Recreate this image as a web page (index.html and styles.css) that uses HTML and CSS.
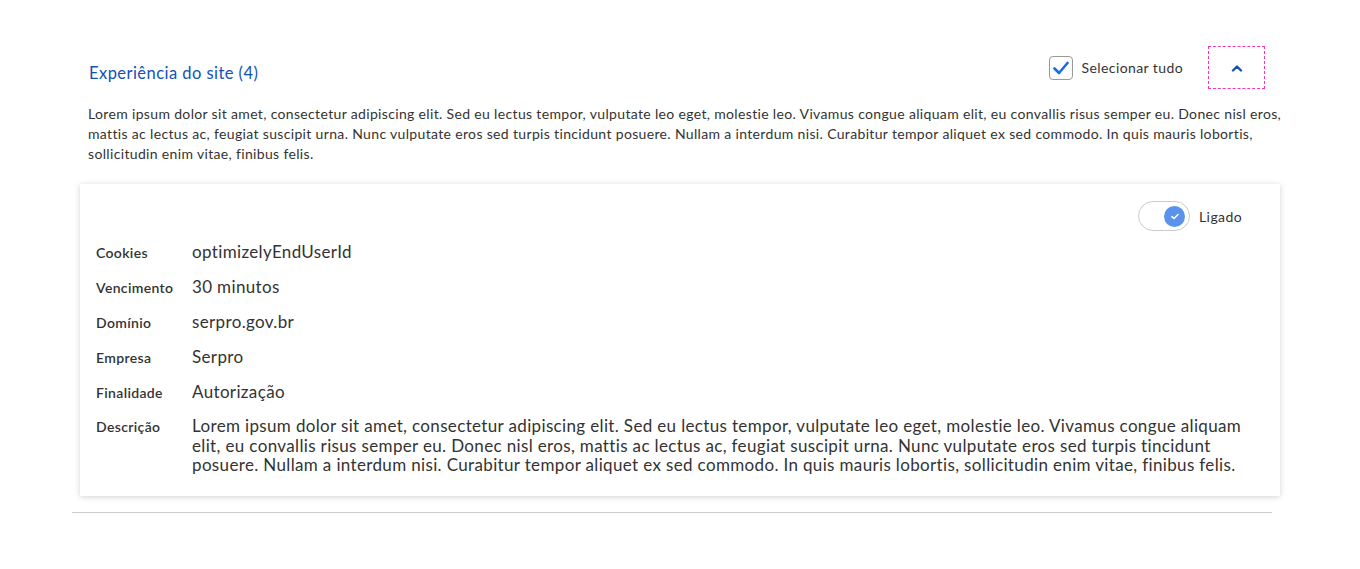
FILE: index.html
```html
<!DOCTYPE html>
<html lang="pt-BR">
<head>
    <meta charset="UTF-8">
    <meta name="viewport" content="width=device-width, initial-scale=1.0">
    <title>Experiência do site</title>
    <link rel="stylesheet" href="styles.css">
</head>
<body>
    <div class="page">
        <div class="group">
            <div class="group-header">
                <span class="group-title">Experiência do site (4)</span>
                <div class="group-actions">
                    <label class="check">
                        <span class="check-box">
                            <svg width="16" height="14" viewBox="0 0 16 14"><path d="M1.5 7.5 L6 12 L14.5 2" fill="none" stroke="#1a6ce0" stroke-width="2.6" stroke-linecap="round" stroke-linejoin="round"/></svg>
                        </span>
                        <span class="check-label">Selecionar tudo</span>
                    </label>
                    <button class="collapse-btn">
                        <svg width="12" height="8" viewBox="0 0 12 8"><path d="M2 6.5 L6 2.5 L10 6.5" fill="none" stroke="#1351b4" stroke-width="2.4" stroke-linecap="round" stroke-linejoin="round"/></svg>
                    </button>
                </div>
            </div>
            <p class="group-text">Lorem ipsum dolor sit amet, consectetur adipiscing elit. Sed eu lectus tempor, vulputate leo eget, molestie leo. Vivamus congue aliquam elit, eu convallis risus semper eu. Donec nisl eros, mattis ac lectus ac, feugiat suscipit urna. Nunc vulputate eros sed turpis tincidunt posuere. Nullam a interdum nisi. Curabitur tempor aliquet ex sed commodo. In quis mauris lobortis, sollicitudin enim vitae, finibus felis.</p>

            <div class="card">
                <div class="card-top">
                    <label class="switch">
                        <span class="switch-track">
                            <span class="switch-knob">
                                <svg width="8" height="7" viewBox="0 0 8 7"><path d="M1 3.6 L3 5.5 L7 1.5" fill="none" stroke="#fff" stroke-width="1.6" stroke-linecap="round" stroke-linejoin="round"/></svg>
                            </span>
                        </span>
                        <span class="switch-label">Ligado</span>
                    </label>
                </div>
                <div class="info">
                    <div class="info-row"><span class="info-key">Cookies</span><span class="info-val">optimizelyEndUserId</span></div>
                    <div class="info-row"><span class="info-key">Vencimento</span><span class="info-val">30 minutos</span></div>
                    <div class="info-row"><span class="info-key">Domínio</span><span class="info-val">serpro.gov.br</span></div>
                    <div class="info-row"><span class="info-key">Empresa</span><span class="info-val">Serpro</span></div>
                    <div class="info-row"><span class="info-key">Finalidade</span><span class="info-val">Autorização</span></div>
                    <div class="info-row"><span class="info-key">Descrição</span><span class="info-val desc">Lorem ipsum dolor sit amet, consectetur adipiscing elit. Sed eu lectus tempor, vulputate leo eget, molestie leo. Vivamus congue aliquam elit, eu convallis risus semper eu. Donec nisl eros, mattis ac lectus ac, feugiat suscipit urna. Nunc vulputate eros sed turpis tincidunt posuere. Nullam a interdum nisi. Curabitur tempor aliquet ex sed commodo. In quis mauris lobortis, sollicitudin enim vitae, finibus felis.</span></div>
                </div>
            </div>
        </div>
    </div>
</body>
</html>
```

FILE: styles.css
```css
body {
    margin: 0;
    font-family: Lato, "Open Sans", sans-serif;
    color: #333;
    background: #fff;
}
.page {
    padding: 46px 80px 0;
}
.group {
    margin: 0 8px 0 -8px;
    border-bottom: 1px solid #ccc;
    padding-bottom: 16px;
}
.group-header {
    display: flex;
    justify-content: space-between;
    align-items: center;
    padding: 0 7px 0 17px;
}
.group-title {
    color: #1351b4;
    font-size: 16.5px;
    letter-spacing: 0.45px;
    padding-top: 10px;
}
.group-actions {
    display: flex;
    align-items: center;
}
.check {
    display: flex;
    align-items: center;
    margin-right: 25px;
}
.check-box {
    width: 22px;
    height: 22px;
    border: 1px solid #999;
    border-radius: 4px;
    display: flex;
    justify-content: center;
    align-items: center;
}
.check-label {
    font-size: 14px;
    letter-spacing: 0.4px;
    margin-left: 9px;
}
.collapse-btn {
    width: 57px;
    height: 43px;
    border: 1px dashed #f03ab5;
    background: none;
    display: flex;
    justify-content: center;
    align-items: center;
    padding: 0;
}
.group-text {
    margin: 15px -18px 0 16px;
    font-size: 14px;
    letter-spacing: 0.34px;
    line-height: 20px;
}
.card {
    margin: 20px -8px 0 8px;
    box-shadow: 0 1px 6px rgba(0, 0, 0, 0.18);
    padding: 17px 16px 21px;
}
.card-top {
    display: flex;
    justify-content: flex-end;
    padding-right: 22px;
}
.switch {
    display: flex;
    align-items: center;
}
.switch-track {
    width: 52px;
    height: 30px;
    border: 1px solid #ccc;
    border-radius: 15px;
    display: flex;
    justify-content: flex-end;
    align-items: center;
    padding-right: 4px;
    box-sizing: border-box;
}
.switch-knob {
    width: 21px;
    height: 21px;
    border-radius: 50%;
    background: #5a92ec;
    display: flex;
    justify-content: center;
    align-items: center;
}
.switch-label {
    font-size: 14px;
    letter-spacing: 0.4px;
    margin-left: 9px;
}
.info {
    margin-top: 11px;
}
.info-row {
    display: grid;
    grid-template-columns: 96px 1fr;
    align-items: baseline;
    min-height: 35px;
}
.info-row:last-child {
    margin-top: -1px;
}
.info-key {
    font-size: 14px;
    font-weight: 600;
    letter-spacing: 0.35px;
}
.info-val {
    font-size: 17px;
    letter-spacing: 0.35px;
    line-height: 19.5px;
}
.desc {
    padding-right: 16px;
}
```
